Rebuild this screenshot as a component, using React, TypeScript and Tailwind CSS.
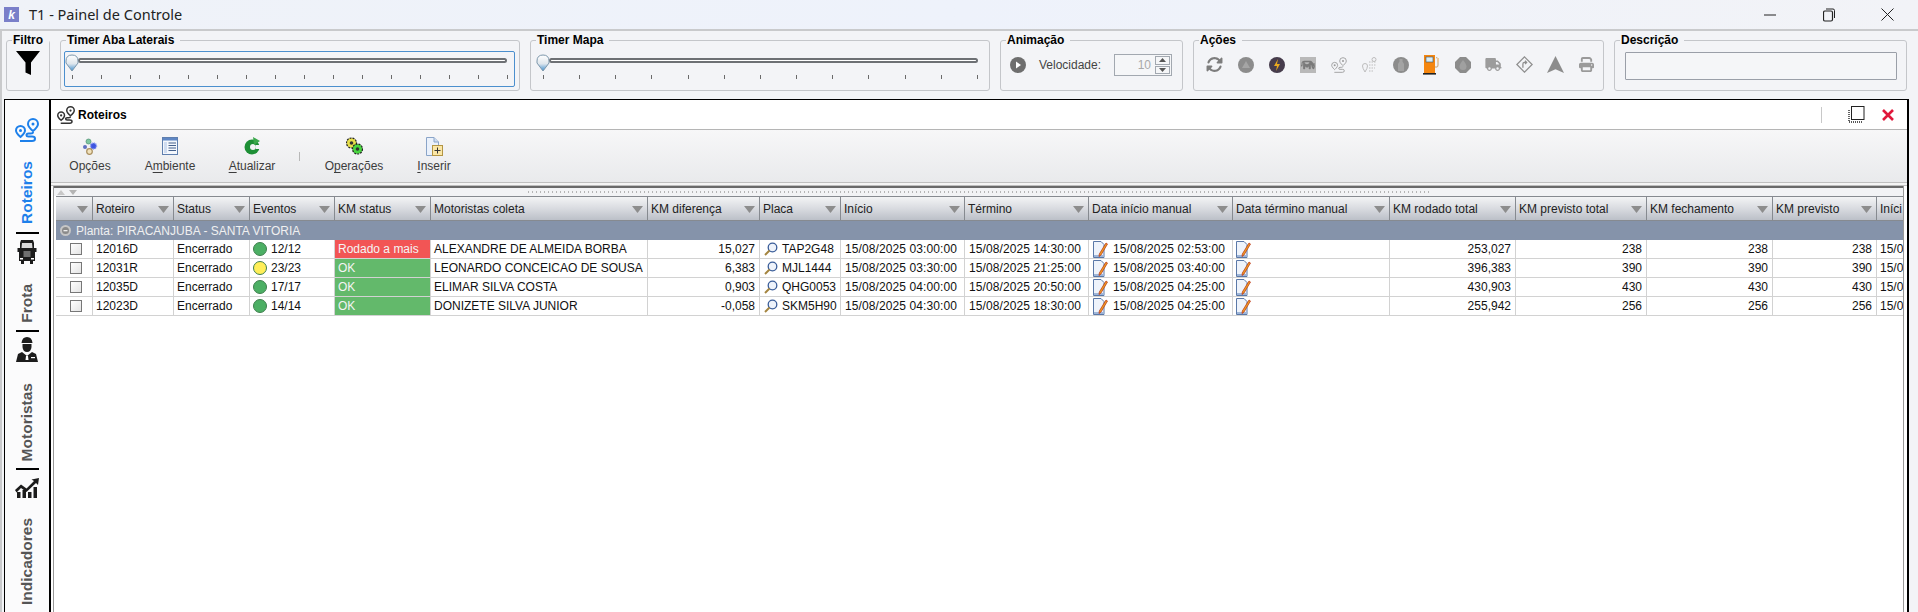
import React from "react";
import { FaCow, FaPrint, FaTruck, FaRotate } from "react-icons/fa6";

const gridCols =
  "grid grid-cols-[37px_81px_76px_85px_96px_217px_112px_81px_124px_124px_144px_157px_126px_131px_126px_104px_27px]";

const RouteIcon = ({ className }: { className: string }) => (
  <svg viewBox="0 0 24 24" fill="none" stroke="currentColor" strokeWidth="2" className={className}>
    <path d="M18 1a5 5 0 0 1 5 5c0 2.800-5 7-5 7s-5-4.200-5-7a5 5 0 0 1 5-5z" />
    <circle cx="18" cy="6" r="1.500" fill="currentColor" stroke="none" />
    <path d="M5.500 8a4.500 4.500 0 0 1 4.500 4.500c0 2.500-4.500 6.500-4.500 6.500s-4.500-4-4.500-6.500a4.500 4.500 0 0 1 4.500-4.500z" />
    <circle cx="5.500" cy="12.500" r="1.500" fill="currentColor" stroke="none" />
    <path d="M18 14Q18 15.500 15.500 15.500H13.500Q11.500 15.500 11.500 17Q11.500 18.500 13.500 18.500H17Q20 18.500 20 20.700Q20 23 17 23H5" />
  </svg>
);

const Truck = () => (
  <svg viewBox="0 0 20 24" className="h-[24px] w-[20px]" fill="#1c1c1c">
    <path d="M4 0H16L17 3V8H19.500V12H18V21H16V24H13V21H7V24H4V21H2V12H.5V8H3V3Z" />
    <path d="M5 3H15L15.500 8H4.500Z" fill="#d9d9d9" />
    <rect x="6.500" y="11" width="7" height="6" fill="#6f6f6f" />
    <rect x="3" y="18" width="3" height="1.500" fill="#fff" />
    <rect x="14" y="18" width="3" height="1.500" fill="#fff" />
  </svg>
);

const Driver = () => (
  <svg viewBox="0 0 22 25" className="h-[25px] w-[22px]" fill="#1c1c1c">
    <path d="M5.500 6Q6 0 11 0T16.500 6Z" />
    <path d="M6.500 7H15.500V10Q15 15 11 15T6.500 10Z" />
    <path d="M6 15L11 19L16 15L20 17L22 25H0L2 17Z" />
    <path d="M10 19H12L12.500 23H9.500Z" fill="#fff" />
    <rect x="15" y="20" width="4" height="1.200" fill="#fff" />
  </svg>
);

const Chart = () => (
  <svg viewBox="0 0 24 20" className="h-[20px] w-[24px]" fill="#1c1c1c">
    <rect x="2" y="14" width="3.500" height="6" />
    <rect x="7.500" y="12" width="3.500" height="8" />
    <rect x="13" y="14" width="3.500" height="6" />
    <rect x="18.500" y="9" width="3.500" height="11" />
    <path d="M0 12L6 6.500L11.500 10.500L19 3L16.500 1.500L24 0L23 7L21 5L11.500 14L6 10L1.500 14.500Z" />
  </svg>
);

const Thumb = () => (
  <svg viewBox="0 0 14 18" className="h-[18px] w-[14px]">
    <defs>
      <linearGradient id="th" x1="0" y1="0" x2="0" y2="1">
        <stop offset="0" stopColor="#ffffff" />
        <stop offset=".55" stopColor="#dfe6ec" />
        <stop offset="1" stopColor="#3d8fd0" />
      </linearGradient>
    </defs>
    <path d="M1 7Q1 1 7 1T13 7V9L7 17L1 9Z" fill="url(#th)" stroke="#7d97ab" strokeWidth="1" />
  </svg>
);

const Slider = ({ ticks, tickWidth, trackWidth }: { ticks: number; tickWidth: string; trackWidth: string }) => (
  <div className="pt-[6px]">
    <div className={`relative ml-[13px] h-[5px] rounded-sm border-2 border-[#6d7074] bg-white ${trackWidth}`}>
      <div className="absolute left-[-15px] top-[-6px]">
        <Thumb />
      </div>
    </div>
    <div className={`ml-[7px] mt-[12px] flex h-[4px] justify-between ${tickWidth}`}>
      {Array.from({ length: ticks }).map((_, i) => (
        <span key={i} className="h-[4px] w-px bg-[#6a6a6a]" />
      ))}
    </div>
  </div>
);

const Panel = ({ title, className, children }: { title: string; className: string; children?: React.ReactNode }) => (
  <fieldset className={`h-[58px] rounded-[3px] border border-[#c4c6ca] ${className}`}>
    <legend className="ml-[5px] pl-px pr-[6px] text-[12px] font-bold leading-[14px] text-black">{title}</legend>
    {children}
  </fieldset>
);

const Gray = "#8c8c8c";

const actionIcons: React.ReactNode[] = [
  <FaRotate key="a" className="h-[17px] w-[17px] text-[#7d7d7d]" />,
  <svg key="b" viewBox="0 0 16 16" className="h-[16px] w-[16px]">
    <circle cx="8" cy="8" r="8" fill={Gray} />
    <path d="M8 4L12 11H4Z" fill="#a5a5a5" />
  </svg>,
  <svg key="c" viewBox="0 0 16 16" className="h-[16px] w-[16px]">
    <circle cx="8" cy="8" r="8" fill="#463c4c" />
    <path d="M9 2L5 9H8L7 14L11 7H8Z" fill="#e9a91e" />
  </svg>,
  <span key="d" className="flex h-[16px] w-[16px] items-center justify-center bg-[#b9b9b9]">
    <FaCow className="h-[12px] w-[14px] text-[#7a7a7a]" />
  </span>,
  <RouteIcon key="e" className="h-[16px] w-[16px] text-[#9a9a9a] [&_*]:[stroke-width:1.300]" />,
  <svg key="f" viewBox="0 0 16 16" className="h-[16px] w-[16px]" fill="none" stroke="#bdbdbd" strokeWidth="1">
    <circle cx="12" cy="2.500" r="2" />
    <path d="M3 6.500A2.500 2.500 0 0 1 5.500 9Q5.500 11 3 15Q.5 11 .5 9A2.500 2.500 0 0 1 3 6.500Z" />
    <path d="M7 5H14M7 8H14M7 11H13M7 14H12" strokeDasharray="1.500 1" />
  </svg>,
  <svg key="g" viewBox="0 0 16 16" className="h-[16px] w-[16px]">
    <circle cx="8" cy="8" r="8" fill={Gray} />
    <path d="M6.500 2H9.500V4.500L11 7V14H5V7L6.500 4.500Z" fill="#a3a3a3" />
  </svg>,
  <svg key="h" viewBox="0 0 17 20" className="h-[20px] w-[17px]">
    <rect x="1" y="0" width="11" height="18" fill="#f5860f" />
    <rect x="3" y="2" width="7" height="5" fill="#d8ecf6" stroke="#35556e" strokeWidth=".6" />
    <rect x="0" y="18" width="13" height="1.600" fill="#222" />
    <path d="M12 12H14Q15 12 15 10V5L13.500 2" fill="none" stroke="#c4a070" strokeWidth="1" />
    <rect x="14" y="3" width="2" height="4" fill="#e8c9a0" />
  </svg>,
  <svg key="i" viewBox="0 0 16 16" className="h-[16px] w-[16px]">
    <path d="M5 0H11L16 5V11L11 16H5L0 11V5Z" fill={Gray} />
    <path d="M8 3Q11.500 7 11.500 9.500A3.500 3.500 0 0 1 4.500 9.500Q4.500 7 8 3Z" fill="#a0a0a0" />
  </svg>,
  <FaTruck key="j" className="h-[13px] w-[17px] text-[#9c9c9c]" />,
  <svg key="k" viewBox="0 0 16 16" className="h-[17px] w-[17px]" fill="none" stroke="#8f8f8f" strokeWidth="1.200">
    <path d="M8 .8L15.200 8L8 15.200L.8 8Z" />
    <path d="M6.500 11V7.500Q6.500 6 8 6H10M8.500 4.500L10 6L8.500 7.500" />
  </svg>,
  <svg key="l" viewBox="0 0 16 16" className="h-[17px] w-[17px]">
    <path d="M8 0L16 16L8 12.500L0 16Z" fill={Gray} />
  </svg>,
  <FaPrint key="m" className="h-[15px] w-[15px] text-[#9a9a9a]" />,
];

const IconGears = () => (
  <svg viewBox="0 0 17 17" className="h-[17px] w-[17px]">
    <circle cx="6.500" cy="3.500" r="2.500" fill="#7fc7a0" stroke="#4f8f72" strokeWidth=".7" />
    <circle cx="11.500" cy="8" r="3" fill="#3d54e0" stroke="#8c9cf0" strokeWidth="1.500" strokeDasharray="1 1" />
    <circle cx="3" cy="9" r="2" fill="#5f6fc0" />
    <circle cx="7.500" cy="13.500" r="2.800" fill="#f1e2bd" stroke="#a98f5e" strokeWidth="1.200" />
  </svg>
);
const IconWindow = () => (
  <svg viewBox="0 0 16 18" className="h-[18px] w-[16px]">
    <rect x=".5" y=".5" width="15" height="17" fill="#f4f7fc" stroke="#5f7fae" />
    <rect x="1" y="1" width="14" height="2.500" fill="#5f87c4" />
    <rect x="2" y="5" width="3" height="11" fill="#cfdcf0" />
    <path d="M6.500 6H14M6.500 8.500H14M6.500 11H14M6.500 13.500H14" stroke="#45618c" />
  </svg>
);
const IconRefresh = () => (
  <svg viewBox="0 0 17 18" className="h-[18px] w-[17px]">
    <circle cx="8" cy="10" r="7.500" fill="#1d8f35" />
    <circle cx="9" cy="10" r="3" fill="#f2f3f5" />
    <path d="M9 0L16 4L10 8Z" fill="#3aa84a" />
    <rect x="12" y="8" width="5" height="4" fill="#f2f3f5" />
  </svg>
);
const IconOps = () => (
  <svg viewBox="0 0 17 18" className="h-[18px] w-[17px]">
    <circle cx="5.500" cy="6" r="5" fill="#e8e04a" stroke="#222" strokeWidth="1.200" strokeDasharray="2 1" />
    <circle cx="5.500" cy="6" r="1.800" fill="#333" />
    <circle cx="11.500" cy="12" r="5" fill="#49d63f" stroke="#222" strokeWidth="1.200" strokeDasharray="2 1" />
    <circle cx="11.500" cy="12" r="1.800" fill="#333" />
  </svg>
);
const IconInsert = () => (
  <svg viewBox="0 0 17 19" className="h-[19px] w-[17px]">
    <path d="M.5 .5H8L12.500 5V18.500H.5Z" fill="#eaf1fb" stroke="#8aa4c8" />
    <path d="M8 .5V5H12.500" fill="#cddcf0" stroke="#8aa4c8" />
    <rect x="6.500" y="8.500" width="10" height="10" fill="#fbe7a6" stroke="#b39544" />
    <path d="M11.500 10.500V16.500M8.500 13.500H14.500" stroke="#333" />
  </svg>
);

const Magnifier = () => (
  <svg viewBox="0 0 14 14" className="h-[14px] w-[14px] shrink-0">
    <circle cx="8.500" cy="5.500" r="4.300" fill="#eef3fb" stroke="#3a5d99" strokeWidth="1.300" />
    <path d="M5.500 8.500L1 13" stroke="#a4853f" strokeWidth="2" />
  </svg>
);
const Note = () => (
  <svg viewBox="0 0 15 17" className="h-[17px] w-[15px] shrink-0">
    <path d="M.5 .5H8L11 3.500V16.500H.5Z" fill="#eef3fb" stroke="#5a78a8" />
    <path d="M1 14H11V16H1Z" fill="#9fb6d8" />
    <path d="M13 2L14.500 3L8 14L6 15.500L6.300 13Z" fill="#f0a020" stroke="#b52a12" strokeWidth=".7" />
  </svg>
);

const headers = [
  "", "Roteiro", "Status", "Eventos", "KM status", "Motoristas coleta", "KM diferença", "Placa", "Início", "Término",
  "Data início manual", "Data término manual", "KM rodado total", "KM previsto total", "KM fechamento", "KM previsto", "Iníci",
];

const rows = [
  { id: "12016D", dot: "bg-[#4caf64]", ev: "12/12", km: "Rodado a mais", kmc: "bg-[#f25555]", nome: "ALEXANDRE DE ALMEIDA BORBA", dif: "15,027", placa: "TAP2G48", ini: "15/08/2025 03:00:00", ter: "15/08/2025 14:30:00", man: "15/08/2025 02:53:00", rod: "253,027", prev: "238" },
  { id: "12031R", dot: "bg-[#ffee58]", ev: "23/23", km: "OK", kmc: "bg-[#63b96b]", nome: "LEONARDO CONCEICAO DE SOUSA", dif: "6,383", placa: "MJL1444", ini: "15/08/2025 03:30:00", ter: "15/08/2025 21:25:00", man: "15/08/2025 03:40:00", rod: "396,383", prev: "390" },
  { id: "12035D", dot: "bg-[#4caf64]", ev: "17/17", km: "OK", kmc: "bg-[#63b96b]", nome: "ELIMAR SILVA COSTA", dif: "0,903", placa: "QHG0053", ini: "15/08/2025 04:00:00", ter: "15/08/2025 20:50:00", man: "15/08/2025 04:25:00", rod: "430,903", prev: "430" },
  { id: "12023D", dot: "bg-[#4caf64]", ev: "14/14", km: "OK", kmc: "bg-[#63b96b]", nome: "DONIZETE SILVA JUNIOR", dif: "-0,058", placa: "SKM5H90", ini: "15/08/2025 04:30:00", ter: "15/08/2025 18:30:00", man: "15/08/2025 04:25:00", rod: "255,942", prev: "256" },
];

const cell = "h-[19px] overflow-hidden whitespace-nowrap border-b border-r border-[#d2d2d2] pl-[3px] text-[12px] leading-[18px] text-[#111]";
const cellR = "h-[19px] overflow-hidden whitespace-nowrap border-b border-r border-[#d2d2d2] pr-[4px] text-right text-[12px] leading-[18px] text-[#111]";

const Mn = ({ children }: { children: React.ReactNode }) => <span className="underline underline-offset-2">{children}</span>;

const toolbar: { w: string; icon: React.ReactNode; label: React.ReactNode }[] = [
  { w: "w-[78px]", icon: <IconGears />, label: "Opções" },
  { w: "w-[82px]", icon: <IconWindow />, label: <>A<Mn>m</Mn>biente</> },
  { w: "w-[82px]", icon: <IconRefresh />, label: <><Mn>A</Mn>tualizar</> },
];
const toolbar2: { w: string; icon: React.ReactNode; label: React.ReactNode }[] = [
  { w: "w-[80px]", icon: <IconOps />, label: <>O<Mn>p</Mn>erações</> },
  { w: "w-[80px]", icon: <IconInsert />, label: <><Mn>I</Mn>nserir</> },
];

const ToolBtn = ({ w, icon, label }: { w: string; icon: React.ReactNode; label: React.ReactNode }) => (
  <div className={`flex h-[52px] flex-col items-center ${w}`}>
    <div className="mt-[6px] flex h-[20px] items-center justify-center">{icon}</div>
    <div className="mt-[2px] text-[12px] leading-[16px] text-[#3c3c3c]">{label}</div>
  </div>
);

const VLabel = ({ children, className }: { children: string; className: string }) => (
  <span className={`rotate-180 whitespace-nowrap text-[15.5px] font-bold leading-[16px] [writing-mode:vertical-rl] ${className}`}>
    {children}
  </span>
);

const Sep = () => <div className="h-[2px] w-[23px] shrink-0 bg-black" />;

export default function App() {
  return (
    <div className="flex h-[612px] w-[1918px] flex-col overflow-hidden bg-[#f3f4f7] [font-family:'Liberation_Sans',Arial,sans-serif]">
      {/* title bar */}
      <div className="flex h-[29px] shrink-0 items-center bg-gradient-to-r from-[#eff2f8] via-[#eef2fb] to-[#f2f3f7]">
        <div className="ml-[4px] flex h-[15px] w-[15px] items-center justify-center bg-[#7a7fc9] text-[12px] font-bold italic leading-none text-white">k</div>
        <div className="ml-[10px] text-[14.5px] text-[#222] [font-family:'Noto_Sans',sans-serif]">T1 - Painel de Controle</div>
        <div className="ml-auto flex items-center">
          <svg viewBox="0 0 12 12" className="h-[12px] w-[12px] text-[#222]" stroke="currentColor" fill="none">
            <path d="M0 6H12" />
          </svg>
          <svg viewBox="0 0 12 14" className="ml-[47px] h-[14px] w-[12px]" stroke="#222" fill="none">
            <rect x=".5" y="3" width="9" height="10" rx="1.500" strokeWidth="1.200" />
            <path d="M3 1H10Q11.500 1 11.500 2.500V10" />
          </svg>
          <svg viewBox="0 0 13 13" className="ml-[46px] mr-[24px] h-[13px] w-[13px]" stroke="#222" fill="none">
            <path d="M.5 .5L12.500 12.500M12.500 .5L.5 12.500" />
          </svg>
        </div>
      </div>

      {/* window body */}
      <div className="flex min-h-0 flex-1 flex-col border-l-2 border-t-2 border-[#c9cacc]">
        {/* top controls */}
        <div className="ml-[4px] mt-[2px] flex shrink-0 gap-[10px]">
          <Panel title="Filtro" className="w-[44px]">
            <div className="ml-[9px] mt-[4px]">
              <svg viewBox="0 0 24 24" className="h-[24px] w-[24px]">
                <path d="M0 0H24L15 11.500V24L9.500 21.500V11.500Z" fill="#000" />
              </svg>
            </div>
          </Panel>
          <Panel title="Timer Aba Laterais" className="w-[460px]">
            <div className="ml-[3px] mt-[4px] h-[36px] w-[451px] rounded-[2px] border border-[#4b8fce]">
              <Slider ticks={16} tickWidth="w-[436px]" trackWidth="w-[429px]" />
            </div>
          </Panel>
          <Panel title="Timer Mapa" className="w-[460px]">
            <div className="ml-[5px] mt-[5px]">
              <Slider ticks={13} tickWidth="w-[435px]" trackWidth="w-[429px]" />
            </div>
          </Panel>
          <Panel title="Animação" className="w-[183px]">
            <div className="flex h-[36px] items-center pl-[9px]">
              <svg viewBox="0 0 16 16" className="h-[16px] w-[16px] shrink-0">
                <circle cx="8" cy="8" r="8" fill="#6e6e6e" />
                <path d="M6 4.500L11 8L6 11.500Z" fill="#fff" />
              </svg>
              <span className="ml-[13px] w-[75px] text-[12px] text-[#444]">Velocidade:</span>
              <div className="flex h-[22px] w-[58px] items-center border border-[#a2a8b0] bg-[#f5f6f8] pr-px">
                <span className="flex-1 pr-[4px] text-right text-[12px] text-[#a9a9a9]">10</span>
                <div className="flex h-[18px] w-[15px] flex-col gap-px">
                  <div className="flex flex-1 items-center justify-center border border-[#a2a8b0] text-[#555]">
                    <svg viewBox="0 0 7 4" className="h-[4px] w-[7px]" fill="currentColor"><path d="M3.500 0L7 4H0Z" /></svg>
                  </div>
                  <div className="flex flex-1 items-center justify-center border border-[#a2a8b0] text-[#555]">
                    <svg viewBox="0 0 7 4" className="h-[4px] w-[7px]" fill="currentColor"><path d="M0 0H7L3.500 4Z" /></svg>
                  </div>
                </div>
              </div>
            </div>
          </Panel>
          <Panel title="Ações" className="w-[411px]">
            <div className="flex h-[35px] items-center pl-[5px]">
              {actionIcons.map((ic, i) => (
                <div key={i} className="flex w-[31px] shrink-0 items-center justify-center">{ic}</div>
              ))}
            </div>
          </Panel>
          <Panel title="Descrição" className="w-[293px]">
            <div className="ml-[10px] mt-[5px] h-[28px] w-[272px] rounded-[1px] border border-[#9a9fa8] bg-[#f5f6f8]" />
          </Panel>
        </div>

        {/* black frame */}
        <div className="ml-[2px] mt-[8px] flex min-h-0 w-[1905px] flex-1 border-l border-r-2 border-t border-black bg-white">
          {/* side tabs */}
          <div className="flex w-[46px] shrink-0 flex-col items-center border-r-2 border-black bg-[#fbfbfc]">
            <RouteIcon className="mt-[18px] h-[24px] w-[24px] shrink-0 text-[#1e80ea]" />
            <div className="mt-[19px]"><VLabel className="block text-[#1e80ea]">Roteiros</VLabel></div>
            <div className="mt-[8px]"><Sep /></div>
            <div className="mt-[6px]"><Truck /></div>
            <div className="mt-[20px]"><VLabel className="block text-[#555]">Frota</VLabel></div>
            <div className="mt-[7px]"><Sep /></div>
            <div className="mt-[5px]"><Driver /></div>
            <div className="mt-[21px]"><VLabel className="block text-[#555]">Motoristas</VLabel></div>
            <div className="mt-[7px]"><Sep /></div>
            <div className="mt-[8px]"><Chart /></div>
            <div className="mt-[20px]"><VLabel className="block text-[#555]">Indicadores</VLabel></div>
          </div>

          {/* content */}
          <div className="flex min-w-0 flex-1 flex-col">
            <div className="flex h-[30px] shrink-0 items-center border-b border-[#b5b5b5] bg-white">
              <RouteIcon className="ml-[6px] h-[18px] w-[18px] text-[#333]" />
              <span className="ml-[3px] text-[12px] font-bold text-black">Roteiros</span>
              <div className="ml-auto h-[16px] w-px bg-[#c8c8c8]" />
              <svg viewBox="0 0 17 17" className="ml-[26px] h-[17px] w-[17px]" fill="none" stroke="#222">
                <rect x="3.500" y=".5" width="12.500" height="13" />
                <path d="M1 4V16H14" strokeDasharray="1 1" strokeWidth="1.400" />
              </svg>
              <svg viewBox="0 0 12 12" className="ml-[17px] mr-[13px] h-[12px] w-[12px]" fill="none" stroke="#e0173a" strokeWidth="2.600">
                <path d="M1 1L11 11M11 1L1 11" />
              </svg>
            </div>

            <div className="flex h-[52px] shrink-0 items-start bg-gradient-to-b from-[#f7f7f8] to-[#e9eaec]">
              {toolbar.map((t, i) => <ToolBtn key={i} {...t} />)}
              <div className="ml-[6px] mr-[14px] mt-[22px] h-[9px] w-px bg-[#b8b8b8]" />
              {toolbar2.map((t, i) => <ToolBtn key={i} {...t} />)}
            </div>

            <div className="h-[4px] shrink-0 border-y border-[#bfbfbf] bg-[#f5f5f5]" />

            {/* table frame */}
            <div className="ml-[2px] mr-[3px] flex min-h-0 flex-1 flex-col border-l border-r border-[#999] bg-white">
              <div className="h-[2px] shrink-0 bg-[#6a6a6a]" />
              <div className="flex h-[8px] shrink-0 items-center bg-[#f2f3f5]">
                <svg viewBox="0 0 20 5" className="ml-[3px] h-[5px] w-[20px]">
                  <path d="M0 5L4 0L8 5Z" fill="#c8c8c8" />
                  <path d="M12 0H20L16 5Z" fill="#b4b4b4" />
                </svg>
                <div className="ml-[451px] h-[2px] w-[902px] bg-[repeating-linear-gradient(90deg,#b5b5b5_0,#b5b5b5_1px,transparent_1px,transparent_4px)]" />
              </div>
              <div className="ml-[2px] overflow-hidden">
                <div className={`${gridCols} w-[1848px]`}>
                  {headers.map((h, i) => (
                    <div key={i} className="relative flex h-[25px] items-center overflow-hidden whitespace-nowrap border-r border-y border-[#868a90] bg-gradient-to-b from-[#f3f4f5] via-[#d9dbe0] to-[#bcc0c8] pl-[3px] text-[12px] text-[#222]">
                      {h}
                      {i < 16 && (
                        <svg viewBox="0 0 11 7" className="absolute right-[4px] top-[9px] h-[7px] w-[11px]">
                          <path d="M0 0H11L5.500 7Z" fill="#8d8d8d" />
                        </svg>
                      )}
                    </div>
                  ))}
                </div>
                <div className="flex h-[19px] w-[1848px] items-center bg-[#8593aa] pl-[4px] text-[12px] text-[#f0f0f0]">
                  <svg viewBox="0 0 11 11" className="h-[11px] w-[11px]">
                    <circle cx="5.500" cy="5.500" r="5.500" fill="#c6c6c6" />
                    <circle cx="5.500" cy="5.500" r="3.500" fill="#8a8a8a" />
                    <rect x="3.500" y="5" width="4" height="1.300" fill="#eee" />
                  </svg>
                  <span className="ml-[5px]">Planta: PIRACANJUBA - SANTA VITORIA</span>
                </div>
                {rows.map((r) => (
                  <div key={r.id} className={`${gridCols} w-[1848px]`}>
                    <div className={`${cell} flex items-center justify-center pl-0`}>
                      <span className="block h-[12px] w-[12px] border border-[#777] bg-gradient-to-br from-white to-[#e4e4e4]" />
                    </div>
                    <div className={cell}>{r.id}</div>
                    <div className={cell}>Encerrado</div>
                    <div className={`${cell} flex items-center`}>
                      <span className={`h-[14px] w-[14px] shrink-0 rounded-full border border-[#3f7f4e] ${r.dot}`} />
                      <span className="ml-[4px]">{r.ev}</span>
                    </div>
                    <div className={`${cell} text-[#f4f4f4] ${r.kmc}`}>{r.km}</div>
                    <div className={`${cell} text-[11.200px]`}>{r.nome}</div>
                    <div className={cellR}>{r.dif}</div>
                    <div className={`${cell} flex items-center pl-[4px]`}>
                      <Magnifier />
                      <span className="ml-[4px]">{r.placa}</span>
                    </div>
                    <div className={`${cell} pl-[4px] tracking-[0.1px]`}>{r.ini}</div>
                    <div className={`${cell} pl-[4px] tracking-[0.1px]`}>{r.ter}</div>
                    <div className={`${cell} flex items-center pl-[4px]`}>
                      <Note />
                      <span className="ml-[5px] tracking-[0.1px]">{r.man}</span>
                    </div>
                    <div className={`${cell} flex items-center pl-[3px]`}><Note /></div>
                    <div className={cellR}>{r.rod}</div>
                    <div className={cellR}>{r.prev}</div>
                    <div className={cellR}>{r.prev}</div>
                    <div className={cellR}>{r.prev}</div>
                    <div className={`${cell} border-r-0`}>15/0</div>
                  </div>
                ))}
              </div>
            </div>
          </div>
        </div>
      </div>
    </div>
  );
}
